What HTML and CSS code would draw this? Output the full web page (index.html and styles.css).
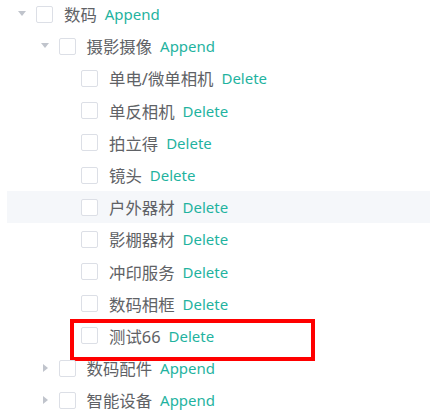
FILE: index.html
```html
<!DOCTYPE html>
<html lang="zh">
<head>
<meta charset="utf-8">
<link rel="stylesheet" href="styles.css">
</head>
<body>
<div class="tree">
  <div class="row lv1"><span class="caret down"></span><span class="cb"></span><span class="label">数码</span><span class="act">Append</span></div>
  <div class="row lv2"><span class="caret down"></span><span class="cb"></span><span class="label">摄影摄像</span><span class="act">Append</span></div>
  <div class="row lv3"><span class="caret none"></span><span class="cb"></span><span class="label">单电/微单相机</span><span class="act">Delete</span></div>
  <div class="row lv3"><span class="caret none"></span><span class="cb"></span><span class="label">单反相机</span><span class="act">Delete</span></div>
  <div class="row lv3"><span class="caret none"></span><span class="cb"></span><span class="label">拍立得</span><span class="act">Delete</span></div>
  <div class="row lv3"><span class="caret none"></span><span class="cb"></span><span class="label">镜头</span><span class="act">Delete</span></div>
  <div class="row lv3 hover"><span class="caret none"></span><span class="cb"></span><span class="label">户外器材</span><span class="act">Delete</span></div>
  <div class="row lv3"><span class="caret none"></span><span class="cb"></span><span class="label">影棚器材</span><span class="act">Delete</span></div>
  <div class="row lv3"><span class="caret none"></span><span class="cb"></span><span class="label">冲印服务</span><span class="act">Delete</span></div>
  <div class="row lv3"><span class="caret none"></span><span class="cb"></span><span class="label">数码相框</span><span class="act">Delete</span></div>
  <div class="row lv3 marked"><span class="caret none"></span><span class="cb"></span><span class="label">测试66</span><span class="act">Delete</span><span class="redbox"></span></div>
  <div class="row lv2"><span class="caret right"></span><span class="cb"></span><span class="label">数码配件</span><span class="act">Append</span></div>
  <div class="row lv2"><span class="caret right"></span><span class="cb"></span><span class="label">智能设备</span><span class="act">Append</span></div>
</div>
</body>
</html>
```
FILE: styles.css
```css
html, body {
  margin: 0;
  padding: 0;
  background: #ffffff;
  overflow: hidden;
}
.tree {
  margin: -2px 0 0 7px;
  font-family: "Noto Sans", "Noto Sans CJK SC", sans-serif;
}
.row {
  position: relative;
  height: 32.2px;
  display: flex;
  align-items: center;
  box-sizing: border-box;
}
.lv1 { padding-left: 0; }
.lv2 { padding-left: 22.5px; }
.lv3 { padding-left: 45px; }
.hover { background: #f5f7fa; }
.caret {
  width: 29px;
  height: 32px;
  flex: none;
  position: relative;
}
.caret.down::after {
  content: "";
  position: absolute;
  left: 11px;
  top: 13px;
  border-left: 4.5px solid transparent;
  border-right: 4.5px solid transparent;
  border-top: 5px solid #c0c4cc;
}
.caret.right::after {
  content: "";
  position: absolute;
  left: 13px;
  top: 11.5px;
  border-top: 4.5px solid transparent;
  border-bottom: 4.5px solid transparent;
  border-left: 5px solid #c0c4cc;
}
.cb {
  width: 17px;
  height: 17px;
  box-sizing: border-box;
  border: 1px solid #dcdfe6;
  border-radius: 2px;
  background: #fff;
  flex: none;
  margin-right: 11px;
}
.label {
  font-size: 16.4px;
  color: #606266;
  white-space: nowrap;
}
.act {
  margin-left: 8px;
  font-size: 15px;
  color: #1fb3a0;
  white-space: nowrap;
}
.redbox {
  position: absolute;
  left: 63px;
  top: -1px;
  width: 245px;
  height: 42px;
  box-sizing: border-box;
  border: 4px solid #ff0000;
}
```
